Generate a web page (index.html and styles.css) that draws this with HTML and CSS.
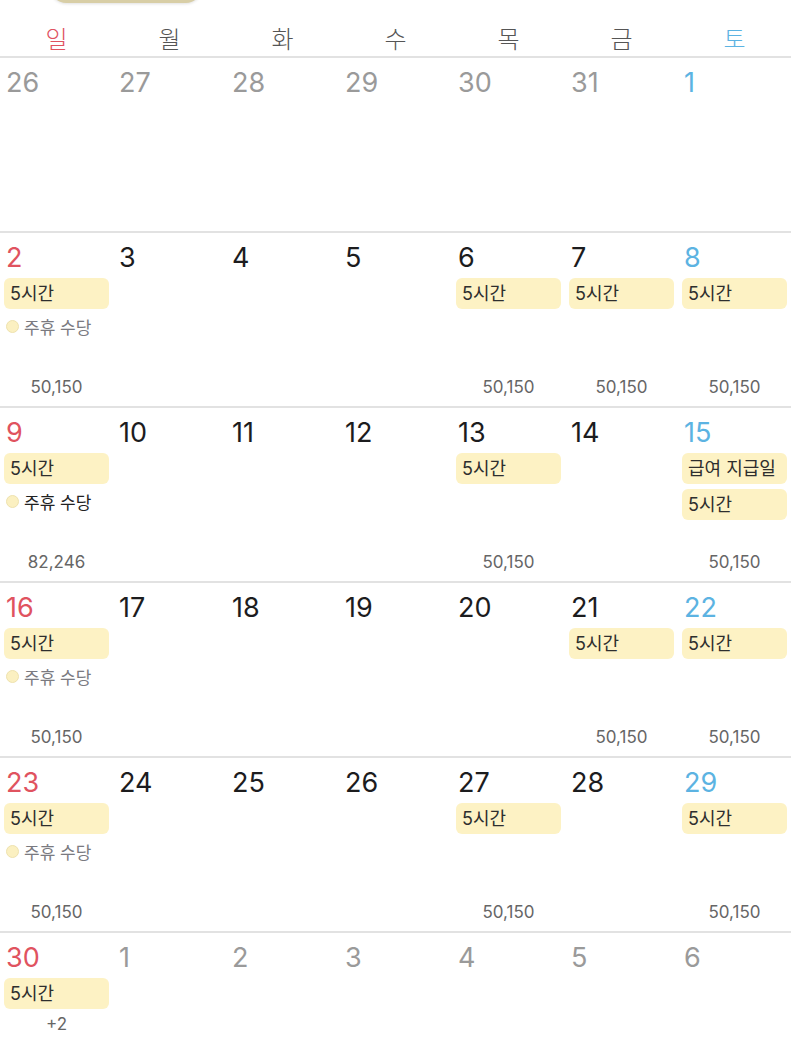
FILE: index.html
```html
<!DOCTYPE html>
<html lang="ko">
<head>
<meta charset="utf-8">
<title>달력</title>
<link rel="stylesheet" href="styles.css">
</head>
<body>
<div class="page">
  <div class="float-btn"></div>
  <div class="weekdays">
    <div class="wd sun">일</div>
    <div class="wd">월</div>
    <div class="wd">화</div>
    <div class="wd">수</div>
    <div class="wd">목</div>
    <div class="wd">금</div>
    <div class="wd sat">토</div>
  </div>

  <div class="week">
    <div class="cell"><div class="num other">26</div></div>
    <div class="cell"><div class="num other">27</div></div>
    <div class="cell"><div class="num other">28</div></div>
    <div class="cell"><div class="num other">29</div></div>
    <div class="cell"><div class="num other">30</div></div>
    <div class="cell"><div class="num other">31</div></div>
    <div class="cell"><div class="num sat">1</div></div>
  </div>

  <div class="week">
    <div class="cell"><div class="num sun">2</div><div class="pill">5시간</div><div class="allow"><span class="dot"></span>주휴 수당</div><div class="amount">50,150</div></div>
    <div class="cell"><div class="num">3</div></div>
    <div class="cell"><div class="num">4</div></div>
    <div class="cell"><div class="num">5</div></div>
    <div class="cell"><div class="num">6</div><div class="pill">5시간</div><div class="amount">50,150</div></div>
    <div class="cell"><div class="num">7</div><div class="pill">5시간</div><div class="amount">50,150</div></div>
    <div class="cell"><div class="num sat">8</div><div class="pill">5시간</div><div class="amount">50,150</div></div>
  </div>

  <div class="week">
    <div class="cell"><div class="num sun">9</div><div class="pill">5시간</div><div class="allow dark"><span class="dot"></span>주휴 수당</div><div class="amount">82,246</div></div>
    <div class="cell"><div class="num">10</div></div>
    <div class="cell"><div class="num">11</div></div>
    <div class="cell"><div class="num">12</div></div>
    <div class="cell"><div class="num">13</div><div class="pill">5시간</div><div class="amount">50,150</div></div>
    <div class="cell"><div class="num">14</div></div>
    <div class="cell"><div class="num sat">15</div><div class="pill">급여 지급일</div><div class="pill">5시간</div><div class="amount">50,150</div></div>
  </div>

  <div class="week">
    <div class="cell"><div class="num sun">16</div><div class="pill">5시간</div><div class="allow"><span class="dot"></span>주휴 수당</div><div class="amount">50,150</div></div>
    <div class="cell"><div class="num">17</div></div>
    <div class="cell"><div class="num">18</div></div>
    <div class="cell"><div class="num">19</div></div>
    <div class="cell"><div class="num">20</div></div>
    <div class="cell"><div class="num">21</div><div class="pill">5시간</div><div class="amount">50,150</div></div>
    <div class="cell"><div class="num sat">22</div><div class="pill">5시간</div><div class="amount">50,150</div></div>
  </div>

  <div class="week">
    <div class="cell"><div class="num sun">23</div><div class="pill">5시간</div><div class="allow"><span class="dot"></span>주휴 수당</div><div class="amount">50,150</div></div>
    <div class="cell"><div class="num">24</div></div>
    <div class="cell"><div class="num">25</div></div>
    <div class="cell"><div class="num">26</div></div>
    <div class="cell"><div class="num">27</div><div class="pill">5시간</div><div class="amount">50,150</div></div>
    <div class="cell"><div class="num">28</div></div>
    <div class="cell"><div class="num sat">29</div><div class="pill">5시간</div><div class="amount">50,150</div></div>
  </div>

  <div class="week">
    <div class="cell"><div class="num sun">30</div><div class="pill">5시간</div><div class="more">+2</div></div>
    <div class="cell"><div class="num other">1</div></div>
    <div class="cell"><div class="num other">2</div></div>
    <div class="cell"><div class="num other">3</div></div>
    <div class="cell"><div class="num other">4</div></div>
    <div class="cell"><div class="num other">5</div></div>
    <div class="cell"><div class="num other">6</div></div>
  </div>
</div>
</body>
</html>
```

FILE: styles.css
```css
html, body {
  margin: 0;
  padding: 0;
  background: #ffffff;
}
body {
  width: 791px;
  height: 1040px;
  overflow: hidden;
  font-family: Inter, "Noto Sans CJK KR", "Noto Sans", sans-serif;
  color: #1c1c1e;
}
.page {
  position: relative;
  width: 791px;
}
.float-btn {
  position: absolute;
  left: 50px;
  top: -30px;
  width: 152px;
  height: 33px;
  border-radius: 17px;
  background: #d8cea6;
  box-shadow: 0 1px 3px rgba(0,0,0,0.12);
  z-index: 2;
}
.weekdays {
  display: grid;
  grid-template-columns: repeat(7, 1fr);
  height: 56px;
  border-bottom: 2px solid #e2e2e2;
}
.wd {
  text-align: center;
  font-family: "Noto Sans CJK KR", sans-serif;
  font-size: 24px;
  font-weight: 300;
  line-height: 24px;
  padding-top: 26px;
  color: #555;
}
.wd.sun { color: #e0535f; }
.wd.sat { color: #5cb3e2; }

.week {
  display: grid;
  grid-template-columns: repeat(7, 1fr);
  height: 173px;
  border-bottom: 2px solid #e2e2e2;
}
.cell {
  display: flex;
  flex-direction: column;
  padding: 9px 4px 9px 4px;
  min-width: 0;
}
.num {
  font-size: 27px;
  line-height: 32px;
  padding-left: 2px;
  color: #1c1c1e;
}
.num.sun { color: #e0535f; }
.num.sat { color: #5cb3e2; }
.num.other { color: #9a9a9a; }

.pill {
  margin-top: 4px;
  height: 31px;
  line-height: 31px;
  border-radius: 6px;
  background: #fdf2c4;
  padding-left: 6px;
  font-size: 18px;
  color: #2e2e2e;
  white-space: nowrap;
  overflow: hidden;
}
.pill + .pill { margin-top: 5px; }

.allow {
  margin-top: 6px;
  display: flex;
  align-items: center;
  height: 22px;
  font-size: 17px;
  color: #7a7a80;
  white-space: nowrap;
  padding-left: 2px;
}
.allow.dark { color: #222; }
.dot {
  width: 11px;
  height: 11px;
  border-radius: 50%;
  background: #fbf0c1;
  border: 1px solid #eee2ae;
  margin-right: 5px;
  flex: none;
}
.amount {
  margin-top: auto;
  text-align: center;
  font-size: 17px;
  line-height: 20px;
  color: #666;
}
.more {
  margin-top: 5px;
  text-align: center;
  font-size: 17px;
  line-height: 20px;
  color: #666;
}
```
